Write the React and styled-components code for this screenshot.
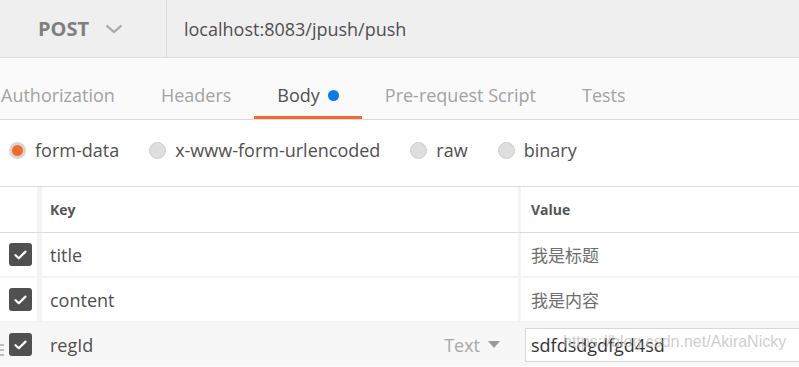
import React from 'react';
import styled, { createGlobalStyle } from 'styled-components';

const GlobalStyle = createGlobalStyle`
  html, body {
    margin: 0;
    padding: 0;
    background: #ffffff;
    overflow: hidden;
  }
  body {
    font-family: "Open Sans", "Noto Sans CJK SC", sans-serif;
  }
`;

const Page = styled.div`
  position: relative;
  width: 799px;
  height: 367px;
  overflow: hidden;
  background: #ffffff;
`;

// barra superior com método e url
const RequestBar = styled.div`
  display: flex;
  height: 57px;
  background: #efefef;
  border-bottom: 1px solid #dcdcdc;
`;

const MethodSelect = styled.div`
  width: 167px;
  display: flex;
  align-items: center;
  padding-left: 38px;
  box-sizing: border-box;
  border-right: 1px solid #dcdcdc;
  font-size: 20px;
  font-weight: 700;
  color: #7f7f7f;
  gap: 16px;
`;

const UrlText = styled.div`
  display: flex;
  align-items: center;
  padding-left: 17px;
  font-size: 18px;
  color: #505050;
`;

const TabsBar = styled.div`
  display: flex;
  height: 61px;
  background: #fafafa;
  border-bottom: 1px solid #dcdcdc;
  margin-left: -22px;
`;

const Tab = styled.div`
  position: relative;
  display: flex;
  align-items: center;
  gap: 8px;
  padding: 12px 23px 0;
  font-size: 18px;
  color: ${p => (p.$active ? '#505050' : '#a3a3a3')};

  &::after {
    content: '';
    display: ${p => (p.$active ? 'block' : 'none')};
    position: absolute;
    left: 0;
    right: 0;
    bottom: 0;
    height: 3px;
    background: #f26b2a;
  }
`;

const Dot = styled.span`
  width: 11px;
  height: 11px;
  border-radius: 50%;
  background: #097bed;
  margin-top: 1px;
`;

const RadioRow = styled.div`
  display: flex;
  align-items: center;
  height: 66px;
  padding: 0 0 6px 9px;
  box-sizing: border-box;
  gap: 30px;
`;

const RadioItem = styled.label`
  display: flex;
  align-items: center;
  gap: 9px;
  font-size: 18px;
  color: #505050;
`;

const RadioCircle = styled.span`
  width: 17px;
  height: 17px;
  box-sizing: border-box;
  border-radius: 50%;
  border: ${p => (p.$checked ? '3px solid #d6d6d6' : '1px solid #cfcfcf')};
  background: ${p => (p.$checked ? '#f26b2a' : '#dedede')};
`;

const Table = styled.div`
  border-top: 1px solid #dcdcdc;
`;

const HeaderRow = styled.div`
  display: flex;
  height: 45px;
  border-bottom: 1px solid #dcdcdc;
`;

const Row = styled.div`
  position: relative;
  display: flex;
  height: 43px;
  background: ${p => (p.$hover ? '#f7f7f7' : '#ffffff')};
  border-bottom: ${p => (p.$last ? 'none' : '2px solid #f4f4f4')};
`;

const CheckCell = styled.div`
  width: 37px;
  display: flex;
  align-items: center;
  padding-left: 9px;
  box-sizing: border-box;
`;

const KeyCell = styled.div`
  width: 481px;
  display: flex;
  align-items: center;
  padding-left: 8px;
  box-sizing: border-box;
  border-left: ${p => (p.$plain ? '5px solid transparent' : '5px solid #f4f4f4')};
  font-size: ${p => (p.$head ? '14px' : '18px')};
  font-weight: ${p => (p.$head ? 700 : 400)};
  color: ${p => (p.$head ? '#555555' : '#505050')};
`;

const ValueCell = styled.div`
  flex: 1;
  display: flex;
  align-items: center;
  padding-left: 10px;
  box-sizing: border-box;
  border-left: 3px solid #f4f4f4;
  font-size: ${p => (p.$head ? '14px' : '17px')};
  font-weight: ${p => (p.$head ? 700 : 400)};
  color: ${p => (p.$head ? '#555555' : '#6e6e6e')};
`;

const TypeSelect = styled.div`
  margin-left: auto;
  margin-right: 18px;
  display: flex;
  align-items: center;
  gap: 8px;
  color: #a8a8a8;
  font-size: 18px;
`;

const ValueInput = styled.div`
  margin: 5px 0 4px 7px;
  flex: 1;
  display: flex;
  align-items: center;
  padding-left: 5px;
  background: #ffffff;
  border: 1px solid #d8d8d8;
  border-right: none;
  font-size: 18px;
  color: #333333;
`;

const CheckBox = styled.span`
  width: 23px;
  height: 23px;
  border-radius: 3px;
  background: #505050;
  display: flex;
  align-items: center;
  justify-content: center;
`;

const DragHandle = styled.div`
  position: absolute;
  left: 0;
  top: 16px;
`;

const Watermark = styled.div`
  position: absolute;
  left: 563px;
  top: 333px;
  font-family: "Liberation Sans", Arial, sans-serif;
  font-size: 16px;
  color: rgba(190, 190, 190, 0.75);
  pointer-events: none;
`;

function Check() {
  return (
    <CheckBox>
      <svg width="13" height="10" viewBox="0 0 13 10">
        <path d="M1.5 5.2 L4.8 8.3 L11.5 1.6" fill="none" stroke="#ffffff" strokeWidth="2.2" strokeLinecap="round" strokeLinejoin="round" />
      </svg>
    </CheckBox>
  );
}

const rows = [
  { key: 'title', value: '我是标题' },
  { key: 'content', value: '我是内容' },
];

export default function App() {
  return (
    <Page>
      <GlobalStyle />
      <RequestBar>
        <MethodSelect>
          POST
          <svg width="18" height="10" viewBox="0 0 18 10">
            <path d="M1.5 1.5 L9 8 L16.5 1.5" fill="none" stroke="#a8a8a8" strokeWidth="2.2" />
          </svg>
        </MethodSelect>
        <UrlText>localhost:8083/jpush/push</UrlText>
      </RequestBar>

      <TabsBar>
        <Tab>Authorization</Tab>
        <Tab>Headers</Tab>
        <Tab $active>Body <Dot /></Tab>
        <Tab>Pre-request Script</Tab>
        <Tab>Tests</Tab>
      </TabsBar>

      <RadioRow>
        <RadioItem><RadioCircle $checked />form-data</RadioItem>
        <RadioItem><RadioCircle />x-www-form-urlencoded</RadioItem>
        <RadioItem><RadioCircle />raw</RadioItem>
        <RadioItem><RadioCircle />binary</RadioItem>
      </RadioRow>

      <Table>
        <HeaderRow>
          <CheckCell />
          <KeyCell $head>Key</KeyCell>
          <ValueCell $head>Value</ValueCell>
        </HeaderRow>

        {rows.map(r => (
          <Row key={r.key}>
            <CheckCell><Check /></CheckCell>
            <KeyCell>{r.key}</KeyCell>
            <ValueCell>{r.value}</ValueCell>
          </Row>
        ))}

        <Row $hover $last>
          <DragHandle>
            <svg width="6" height="12" viewBox="0 0 6 12">
              <rect x="0" y="0" width="4" height="2" fill="#bdbdbd" />
              <rect x="0" y="5" width="4" height="2" fill="#bdbdbd" />
              <rect x="0" y="10" width="4" height="2" fill="#bdbdbd" />
            </svg>
          </DragHandle>
          <CheckCell><Check /></CheckCell>
          <KeyCell $plain>
            regId
            <TypeSelect>
              Text
              <svg width="12" height="8" viewBox="0 0 12 8">
                <path d="M0 0 L12 0 L6 7 Z" fill="#9a9a9a" />
              </svg>
            </TypeSelect>
          </KeyCell>
          <ValueInput>sdfdsdgdfgd4sd</ValueInput>
        </Row>
      </Table>

      <Watermark>https://blog.csdn.net/AkiraNicky</Watermark>
    </Page>
  );
}
